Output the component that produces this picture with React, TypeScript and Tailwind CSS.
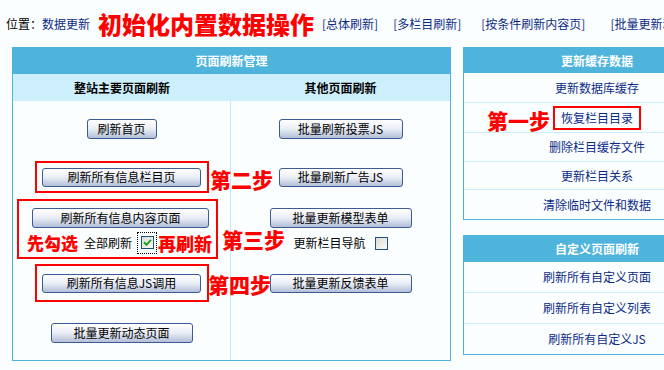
import React from "react";

function Btn({ className, children }: { className: string; children: React.ReactNode }) {
  return (
    <div
      className={`flex items-center justify-center rounded-[3px] border border-[#3B5B92] bg-linear-to-b from-[#FFFFFF] via-[#E9EDF5] to-[#B3BFD8] text-[12px] leading-[14px] text-black whitespace-nowrap ${className}`}
    >
      {children}
    </div>
  );
}

function CheckBox({ checked }: { checked?: boolean }) {
  return (
    <div className="w-[13px] h-[13px] border border-[#1C5180] bg-linear-to-br from-[#DCDCD5] to-[#FBFBF8] flex items-center justify-center">
      {checked && (
        <svg width="9" height="9" viewBox="0 0 9 9">
          <path d="M1 4.2 L3.5 6.8 L8 1.8" stroke="#21A121" strokeWidth="2" fill="none" />
        </svg>
      )}
    </div>
  );
}

const red = "text-[#FF0000] font-black whitespace-nowrap";

export default function App() {
  return (
    <div className="w-[664px] h-[370px] overflow-hidden bg-[#FBFEFE] font-['Noto_Sans_CJK_SC',sans-serif] text-[12px] leading-[14px] text-black">
      {/* top bar */}
      <div className="h-[47px] flex items-center pl-[6px] whitespace-nowrap">
        <span>位置：</span>
        <span className="text-[#0B2A86]">数据更新</span>
        <span className={`ml-[8px] text-[24px] leading-[28px] ${red}`}>初始化内置数据操作</span>
        <span className="ml-[8px] text-[#0B2A86]">[总体刷新]</span>
        <span className="ml-[15px] text-[#0B2A86]">[多栏目刷新]</span>
        <span className="ml-[20px] text-[#0B2A86]">[按条件刷新内容页]</span>
        <span className="ml-[25px] text-[#0B2A86]">[批量更新动态页面]</span>
      </div>

      <div className="flex items-start">
        {/* left panel */}
        <div className="ml-[12px] w-[439px] shrink-0 border border-[#4FB4DC]">
          <div className="h-[26px] bg-[#4FB4DC] flex items-center justify-center text-white font-bold">
            页面刷新管理
          </div>
          <div className="h-[27px] flex bg-[#CDEFFB] font-bold">
            <div className="w-[218px] flex items-center justify-center">整站主要页面刷新</div>
            <div className="flex-1 flex items-center justify-center">其他页面刷新</div>
          </div>
          <div className="relative flex">
            {/* left column */}
            <div className="w-[218px] border-r border-[#C3E9F7] flex flex-col">
              <div className="h-[56px] flex items-center justify-center">
                <Btn className="w-[70px] h-[20px]">刷新首页</Btn>
              </div>
              <div className="h-[40px] flex items-center justify-center">
                <div className="w-[174px] h-[32px] border-2 border-[#FF0000] flex items-center justify-center">
                  <Btn className="w-[159px] h-[19px]">刷新所有信息栏目页</Btn>
                </div>
              </div>
              <div className="h-[64px] flex items-center pl-[4px]">
                <div className="w-[201px] h-[60px] border-2 border-[#FF0000] flex flex-col pt-[7px]">
                  <Btn className="ml-[13px] w-[177px] h-[20px]">刷新所有信息内容页面</Btn>
                  <div className="flex-1 flex items-center pl-[8px]">
                    <span className={`text-[17px] leading-[20px] ${red}`}>先勾选</span>
                    <span className="ml-[6px] whitespace-nowrap">全部刷新</span>
                    <div className="ml-[5px] w-[20px] h-[22px] border border-dotted border-black flex items-center justify-center">
                      <CheckBox checked />
                    </div>
                    <span className={`ml-[1px] text-[18px] leading-[20px] ${red}`}>再刷新</span>
                  </div>
                </div>
              </div>
              <div className="h-[44px] flex items-center justify-center">
                <div className="w-[174px] h-[38px] border-2 border-[#FF0000] flex items-center justify-center">
                  <Btn className="w-[159px] h-[19px]">刷新所有信息JS调用</Btn>
                </div>
              </div>
              <div className="h-[55px] flex items-center justify-center">
                <Btn className="w-[142px] h-[20px]">批量更新动态页面</Btn>
              </div>
            </div>
            {/* right column */}
            <div className="flex-1 flex flex-col">
              <div className="h-[56px] flex items-center justify-center">
                <Btn className="w-[124px] h-[20px]">批量刷新投票JS</Btn>
              </div>
              <div className="h-[40px] flex items-center justify-center">
                <Btn className="w-[124px] h-[19px]">批量刷新广告JS</Btn>
              </div>
              <div className="h-[64px] flex flex-col items-center pt-[11px]">
                <Btn className="w-[142px] h-[20px]">批量更新模型表单</Btn>
                <div className="mt-[8px] flex items-center">
                  <span className="whitespace-nowrap">更新栏目导航</span>
                  <div className="ml-[9px]">
                    <CheckBox />
                  </div>
                </div>
              </div>
              <div className="h-[44px] flex items-center justify-center">
                <Btn className="w-[142px] h-[19px]">批量更新反馈表单</Btn>
              </div>
              <div className="h-[55px]" />
            </div>

            {/* step annotations */}
            <span className={`absolute left-[197px] top-[66px] text-[21px] leading-[24px] ${red}`}>第二步</span>
            <span className={`absolute left-[209px] top-[126px] text-[21px] leading-[24px] ${red}`}>第三步</span>
            <span className={`absolute left-[195px] top-[171px] text-[21px] leading-[24px] ${red}`}>第四步</span>
          </div>
        </div>

        {/* right column of panels */}
        <div className="ml-[12px] w-[268px] shrink-0 flex flex-col">
          <div className="border border-[#4FB4DC]">
            <div className="h-[25px] bg-[#4FB4DC] flex items-center justify-center text-white font-bold">
              更新缓存数据
            </div>
            <div className="h-[30px] border-b border-[#CBEFFB] flex items-center justify-center text-[#0B2A86]">更新数据库缓存</div>
            <div className="h-[30px] border-b border-[#CBEFFB] flex items-center justify-center text-[#0B2A86]">
              <div className="relative w-[88px] h-[24px] border-2 border-[#FF0000] flex items-center justify-center">
                恢复栏目目录
                <span className={`absolute right-full mr-[5px] top-[0px] text-[21px] leading-[24px] ${red}`}>第一步</span>
              </div>
            </div>
            <div className="h-[29px] border-b border-[#CBEFFB] flex items-center justify-center text-[#0B2A86]">删除栏目缓存文件</div>
            <div className="h-[28px] border-b border-[#CBEFFB] flex items-center justify-center text-[#0B2A86]">更新栏目关系</div>
            <div className="h-[29px] flex items-center justify-center text-[#0B2A86]">清除临时文件和数据</div>
          </div>

          <div className="mt-[15px] border border-[#4FB4DC]">
            <div className="h-[26px] bg-[#4FB4DC] flex items-center justify-center text-white font-bold">
              自定义页面刷新
            </div>
            <div className="h-[31px] border-b border-[#CBEFFB] flex items-center justify-center text-[#0B2A86]">刷新所有自定义页面</div>
            <div className="h-[31px] border-b border-[#CBEFFB] flex items-center justify-center text-[#0B2A86]">刷新所有自定义列表</div>
            <div className="h-[30px] flex items-center justify-center text-[#0B2A86]">刷新所有自定义JS</div>
          </div>
        </div>
      </div>
    </div>
  );
}
